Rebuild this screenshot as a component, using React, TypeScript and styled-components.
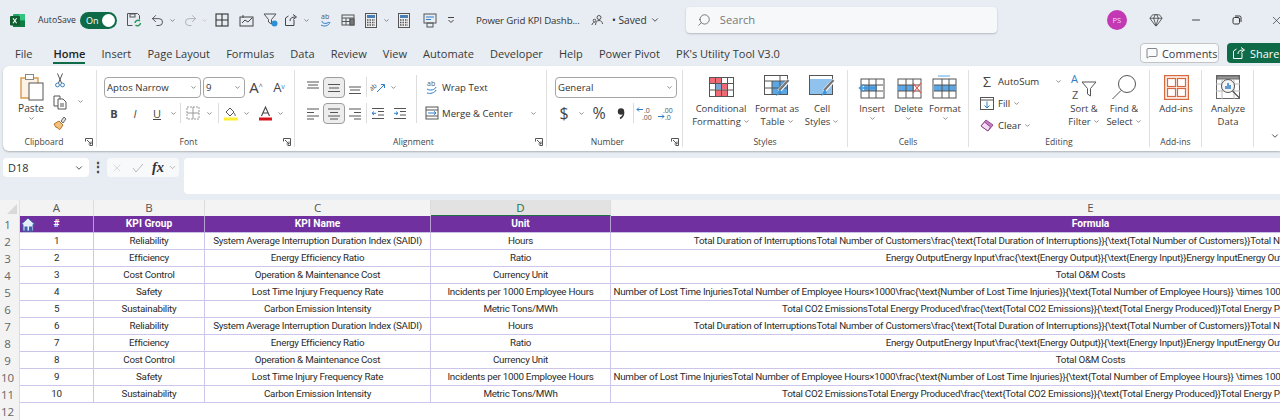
import * as React from 'react';
import styled, { createGlobalStyle } from 'styled-components';
import { Undo2, Redo2, ChevronDown, Minus, X, Gem, Search, MessageSquare } from 'lucide-react';

const UI_FONT = '"Open Sans", "Noto Sans", sans-serif';
const SHEET_FONT = 'Roboto, "Noto Sans", sans-serif';

const GlobalStyle = createGlobalStyle`
  html, body { margin: 0; padding: 0; background: #e7edf3; overflow: hidden; }
  * { box-sizing: border-box; }
  svg { overflow: visible; flex: none; }
`;

const Page = styled.div`
  width: 1280px;
  height: 420px;
  overflow: hidden;
  background: #e7edf3;
  font-family: ${UI_FONT};
  color: #3c3c3c;
`;

/* ---------- title bar ---------- */
const TitleBar = styled.div`
  display: flex;
  align-items: center;
  height: 40px;
  padding-left: 10px;
`;
const QatSlot = styled.div<{ $w: number; $ml?: number }>`
  flex: none;
  width: ${(p) => p.$w}px;
  margin-left: ${(p) => p.$ml ?? 0}px;
  display: flex;
  align-items: center;
  justify-content: center;
`;
const AutoSaveLabel = styled.span`
  flex: none;
  margin-left: 14px;
  width: 42px;
  font-size: 8.7px;
  color: #333;
`;
const Toggle = styled.div`
  flex: none;
  width: 37px;
  height: 17px;
  border-radius: 9px;
  background: #0f6b47;
  color: #fff;
  font-size: 9px;
  display: flex;
  align-items: center;
  justify-content: space-between;
  padding: 0 2px 0 6px;
`;
const Knob = styled.i`
  width: 13px;
  height: 13px;
  border-radius: 50%;
  background: #fff;
`;
const DocTitle = styled.span`
  flex: none;
  margin-left: 20px;
  width: 113px;
  font-size: 9.7px;
  letter-spacing: -0.12px;
  white-space: nowrap;
  color: #333;
`;
const SavedLabel = styled.span`
  flex: none;
  margin-left: 7px;
  font-size: 10.2px;
  white-space: nowrap;
  color: #333;
`;
const SearchBox = styled.div`
  flex: none;
  margin-left: 25px;
  width: 311px;
  height: 26px;
  margin-top: -1px;
  background: #f7f8fa;
  border-radius: 4px;
  box-shadow: 0 1px 2px rgba(0, 0, 0, 0.22);
  display: flex;
  align-items: center;
  gap: 9px;
  padding-left: 11px;
  font-size: 11.2px;
  color: #777;
`;
const SearchGlyph = styled(Search)`
  transform: scaleX(-1);
`;
const Avatar = styled.div`
  flex: none;
  margin-left: 110px;
  width: 20px;
  height: 20px;
  border-radius: 50%;
  background: #c239b3;
  color: #f6d9f2;
  font-size: 7.5px;
  display: flex;
  align-items: center;
  justify-content: center;
`;

/* ---------- tabs ---------- */
const TabRow = styled.div`
  display: flex;
  align-items: flex-start;
  height: 26px;
  padding: 4px 0 0 15px;
`;
const Tab = styled.div<{ $active?: boolean }>`
  flex: none;
  margin-right: 16.1px;
  height: 20px;
  line-height: 20px;
  font-size: 11.05px;
  white-space: nowrap;
  color: ${(p) => (p.$active ? '#222' : '#3a3a3a')};
  font-weight: ${(p) => (p.$active ? 600 : 400)};
  border-bottom: ${(p) => (p.$active ? '2px solid #0f6b47' : '2px solid transparent')};
  &:first-child {
    margin-right: 21px;
  }
`;
const TabActions = styled.div`
  margin-left: auto;
  display: flex;
  gap: 8px;
  margin-top: -1px;
`;
const CommentsBtn = styled.div`
  width: 79px;
  height: 20px;
  border: 1px solid #c4c4c4;
  border-radius: 4px;
  background: #fafbfc;
  font-size: 10.9px;
  display: flex;
  align-items: center;
  gap: 4px;
  padding-left: 5px;
`;
const ShareBtn = styled.div`
  width: 53px;
  height: 20px;
  border-radius: 4px 0 0 4px;
  background: #0f6b47;
  color: #fff;
  font-size: 10.9px;
  display: flex;
  align-items: center;
  gap: 4px;
  padding-left: 5px;
  white-space: nowrap;
`;

/* ---------- ribbon ---------- */
const Ribbon = styled.div`
  display: flex;
  margin-left: 3px;
  height: 85px;
  padding-top: 4px;
  background: #fff;
  border-radius: 6px 0 0 6px;
  box-shadow: 0 1px 2px rgba(0, 0, 0, 0.25);
`;
const Group = styled.div<{ $w: number; $pad?: number }>`
  position: relative;
  flex: none;
  width: ${(p) => p.$w}px;
  height: 77px;
  padding-left: ${(p) => p.$pad ?? 0}px;
  border-right: 1px solid #e0e0e0;
  display: flex;
  flex-direction: column;
`;
const GroupBody = styled.div`
  flex: 1;
  display: flex;
  min-height: 0;
`;
const GroupLabel = styled.div<{ $pull?: number }>`
  height: 10px;
  line-height: 10px;
  margin-left: ${(p) => -(p.$pull ?? 0)}px;
  font-size: 8.6px;
  text-align: center;
  color: #444;
`;
const Launcher = styled.svg`
  position: absolute;
  right: 3px;
  bottom: 1px;
  width: 8px;
  height: 8px;
`;
const Stack = styled.div<{ $w?: number; $gap?: number; $pt?: number; $ml?: number }>`
  flex: none;
  width: ${(p) => (p.$w ? `${p.$w}px` : 'auto')};
  margin-left: ${(p) => p.$ml ?? 0}px;
  display: flex;
  flex-direction: column;
  gap: ${(p) => p.$gap ?? 4}px;
  padding-top: ${(p) => p.$pt ?? 6}px;
`;
const ToolRow = styled.div`
  display: flex;
  align-items: center;
  height: 22px;
`;
const ToolBtn = styled.div<{ $w: number; $on?: boolean }>`
  flex: none;
  width: ${(p) => p.$w}px;
  height: 21px;
  display: flex;
  align-items: center;
  justify-content: center;
  border-radius: 4px;
  font-size: 12px;
  color: #444;
  background: ${(p) => (p.$on ? '#ededed' : 'transparent')};
  border: ${(p) => (p.$on ? '1px solid #9d9d9d' : '1px solid transparent')};
`;
const Glyph = styled.span<{ $size: number; $bold?: boolean; $italic?: boolean; $under?: boolean }>`
  font-size: ${(p) => p.$size}px;
  font-weight: ${(p) => (p.$bold ? 700 : 400)};
  font-style: ${(p) => (p.$italic ? 'italic' : 'normal')};
  text-decoration: ${(p) => (p.$under ? 'underline' : 'none')};
`;
const Caret = styled.sup<{ $blue?: boolean }>`
  font-size: 7px;
  color: ${(p) => (p.$blue ? '#2f7dc8' : '#555')};
  line-height: 0;
`;
const RowSep = styled.div<{ $w: number }>`
  flex: none;
  width: ${(p) => p.$w}px;
  height: 20px;
  display: flex;
  justify-content: center;
  &::before {
    content: '';
    width: 1px;
    background: #dcdcdc;
  }
`;
const TallSep = styled(RowSep)`
  height: 48px;
  margin-top: 5px;
`;
const Combo = styled.div<{ $w: number; $ml?: number }>`
  flex: none;
  width: ${(p) => p.$w}px;
  margin-left: ${(p) => p.$ml ?? 0}px;
  height: 21px;
  border: 1px solid #a5a5a5;
  border-radius: 4px;
  display: flex;
  align-items: center;
  justify-content: space-between;
  padding: 0 3px 0 2px;
  font-size: 9.6px;
  color: #333;
`;
const InlineCmd = styled.div<{ $w?: number }>`
  display: flex;
  align-items: center;
  gap: 3px;
  height: 22px;
  width: ${(p) => (p.$w ? `${p.$w}px` : 'auto')};
  font-size: 9.6px;
  color: #333;
  white-space: nowrap;
`;
const ChevSlot = styled.div<{ $ml?: number; $mt?: number }>`
  margin-left: ${(p) => p.$ml ?? 0}px;
  margin-top: ${(p) => p.$mt ?? 0}px;
  display: flex;
`;
const BigCmd = styled.div<{ $w: number; $ml?: number }>`
  flex: none;
  width: ${(p) => p.$w}px;
  margin-left: ${(p) => p.$ml ?? 0}px;
  display: flex;
  flex-direction: column;
  align-items: center;
  padding-top: 2px;
  font-size: 9.5px;
  line-height: 13px;
  color: #3c3c3c;
  text-align: center;
  white-space: nowrap;
`;
const BigIcon = styled.div`
  height: 30px;
  display: flex;
  align-items: center;
`;
const PasteCmd = styled(BigCmd)`
  font-size: 10.2px;
`;
const ChevLine = styled.span`
  display: inline-flex;
  align-items: center;
  gap: 2px;
`;
const CollapseSlot = styled.div`
  flex: 1;
  display: flex;
  align-items: flex-end;
  justify-content: flex-end;
  padding: 0 0 6px;
  height: 77px;
`;

/* ---------- formula bar ---------- */
const FormulaBar = styled.div`
  display: flex;
  align-items: flex-start;
  height: 49px;
  padding: 7px 0 0 3px;
`;
const NameBox = styled.div`
  width: 86px;
  height: 19px;
  background: #fff;
  border-radius: 4px;
  font-size: 11px;
  display: flex;
  align-items: center;
  justify-content: space-between;
  padding: 0 5px;
  color: #333;
`;
const Dots = styled.div`
  width: 18px;
  height: 19px;
  text-align: center;
  line-height: 18px;
  font-size: 14px;
  font-weight: 700;
  color: #444;
`;
const FxBox = styled.div`
  width: 72px;
  height: 19px;
  background: #f8f9fb;
  border-radius: 4px;
  display: flex;
  align-items: center;
  color: #bbb;
`;
const FxLabel = styled.span`
  font-family: 'Liberation Serif', serif;
  font-style: italic;
  font-weight: 700;
  font-size: 14.5px;
  color: #333;
`;
const FormulaInput = styled.div`
  margin-left: 5px;
  flex: 1;
  height: 36px;
  background: #fff;
  border-radius: 4px 0 0 4px;
`;

/* ---------- sheet ---------- */
const SheetGrid = styled.div`
  width: 1571px;
  display: grid;
  grid-template-columns: 20px 74px 111px 226px 180px 960px;
  grid-auto-rows: 17px;
  grid-template-rows: 16px;
  background: #fff;
  font-family: ${SHEET_FONT};
`;
const Corner = styled.div`
  background: #f3f3f3;
  border-right: 1px solid #e0e0e0;
  display: flex;
  align-items: flex-end;
  justify-content: flex-end;
  padding: 0 2px 2px 0;
  &::before {
    content: '';
    border-style: solid;
    border-width: 0 0 10px 10px;
    border-color: transparent transparent #d9d9d9 transparent;
  }
`;
const ColHead = styled.div<{ $on?: boolean }>`
  background: ${(p) => (p.$on ? '#e2e2e2' : '#f3f3f3')};
  border-right: 1px solid #dcdcdc;
  border-bottom: ${(p) => (p.$on ? '1px solid #1f7145' : '1px solid #f3f3f3')};
  font-size: 11.5px;
  color: ${(p) => (p.$on ? '#1f7145' : '#555')};
  font-family: ${UI_FONT};
  text-align: center;
  line-height: 15px;
`;
const RowHead = styled.div`
  background: #f3f3f3;
  border-right: 1px solid #dcdcdc;
  font-family: ${UI_FONT};
  font-size: 11.5px;
  color: #666;
  padding-right: 4px;
  text-align: center;
  line-height: 17px;
`;
const HeadCell = styled.div`
  position: relative;
  background: #7030a0;
  color: #fff;
  font-weight: 700;
  font-size: 10.2px;
  text-align: center;
  line-height: 16px;
  white-space: nowrap;
  border-right: 1px solid #b9a0d4;
  border-bottom: 1px solid #c9bfe6;
`;
const HomeMark = styled.svg`
  position: absolute;
  left: 0;
  top: 0;
  width: 16px;
  height: 16px;
`;
const Cell = styled.div`
  background: #fff;
  font-size: 9.8px;
  letter-spacing: -0.26px;
  color: #2b2b2b;
  text-align: center;
  line-height: 16px;
  white-space: nowrap;
  border-right: 1px solid #cdc6ea;
  border-bottom: 1px solid #cdc6ea;
  overflow: hidden;
`;
const FormulaCell = styled(Cell)`
  display: flex;
  justify-content: center;
`;
const FormulaText = styled.span`
  flex: none;
`;
const BlankCell = styled.div``;

/* ---------- icons ---------- */
const Chev = ({ s = 7, c = '#555' }: { s?: number; c?: string }) => (
  <ChevronDown size={s} color={c} strokeWidth={2.2} />
);
const ExcelLogo = () => (
  <svg width="15" height="15" viewBox="0 0 15 15">
    <rect x="3" y="1" width="12" height="13" rx="1.2" fill="#21a366" />
    <rect x="9" y="1" width="6" height="6.5" fill="#33c481" />
    <rect x="3" y="7.5" width="12" height="6.5" fill="#107c41" />
    <rect x="0" y="3" width="10" height="9.5" rx="1" fill="#0e5c2f" />
    <path d="M3 5.3l3.6 5M6.6 5.3L3 10.3" stroke="#fff" strokeWidth="1.1" />
  </svg>
);
const SaveIcon = () => (
  <svg width="16" height="16" viewBox="0 0 16 16" fill="none">
    <path d="M1.5 1.500h10l2 2v4M1.500 1.500v12h5" stroke="#555" />
    <rect x="4" y="2" width="5" height="3" stroke="#555" />
    <path d="M9 11a3 3 0 0 1 5-2M14.500 11a3 3 0 0 1-5 2" stroke="#2c9a5f" strokeWidth="1.500" />
  </svg>
);
const GridIcon = () => (
  <svg width="14" height="14" viewBox="0 0 14 14" fill="none" stroke="#333" strokeWidth="1.100">
    <rect x="1" y="1" width="12" height="12" />
    <path d="M7 1v12M1 7h12" />
  </svg>
);
const PicIcon = () => (
  <svg width="15" height="13" viewBox="0 0 15 13" fill="none" stroke="#444">
    <rect x="1" y="3" width="13" height="9" />
    <path d="M3 9l3-3 3 2 4-4M4 1v3" />
  </svg>
);
const FilterIcon = () => (
  <svg width="16" height="16" viewBox="0 0 16 16" fill="none">
    <path d="M1 2h12L8.500 7.500V12L5.500 10V7.500z" stroke="#555" />
    <circle cx="11.500" cy="11.500" r="3" fill="#2f8fd6" />
  </svg>
);
const ShareIcon = ({ c = '#444' }: { c?: string }) => (
  <svg width="14" height="14" viewBox="0 0 14 14" fill="none" stroke={c}>
    <path d="M10 7v5.500H1.500V5l3-2M6 8c0-3 2-4 5-4M9 1.500L12.500 4 9 6.500" />
  </svg>
);
const AbIcon = () => (
  <svg width="14" height="16" viewBox="0 0 14 16" fill="none">
    <text x="2" y="7" fontSize="7" fill="#555" fontFamily="Open Sans">ab</text>
    <path d="M3 9c0 3 5 3 7 1M2 13c3 2 8 1 9-3" stroke="#2f7dc8" />
  </svg>
);
const TableIcon = () => (
  <svg width="14" height="14" viewBox="0 0 14 14" fill="none" stroke="#555">
    <rect x="1" y="2" width="12" height="10" />
    <path d="M1 5h12M5 5v7M9 5v7M1 8.500h8" />
    <rect x="9" y="6" width="4" height="6" fill="#777" />
  </svg>
);
const CalcIcon = () => (
  <svg width="12" height="15" viewBox="0 0 12 15">
    <rect x="0.500" y="0.500" width="11" height="14" fill="#efefef" stroke="#555" />
    <rect x="2" y="2" width="8" height="3" fill="#4a7fb5" />
    <path d="M2 7h8M2 9.500h8M2 12h8" stroke="#555" strokeWidth="1.400" strokeDasharray="1.500 1" />
  </svg>
);
const PrintIcon = () => (
  <svg width="14" height="15" viewBox="0 0 14 15" fill="none" stroke="#555">
    <rect x="1" y="1" width="12" height="9" />
    <path d="M3 4h8M3 6.500h5" stroke="#2f7dc8" />
    <rect x="4" y="10" width="6" height="4" />
  </svg>
);
const QatMore = () => (
  <svg width="8" height="8" viewBox="0 0 8 8" fill="none" stroke="#444">
    <path d="M1 1.500h6M1.500 4L4 6.500 6.500 4" />
  </svg>
);
const PeopleIcon = () => (
  <svg width="13" height="12" viewBox="0 0 13 12" fill="none" stroke="#444" strokeWidth="0.900">
    <circle cx="8" cy="3.500" r="2" />
    <path d="M4.500 11c0-3 1.500-4.500 3.500-4.500S11.500 8 11.500 10M1 11c0-1.500 1-2.500 2.500-2.500" />
    <circle cx="3.500" cy="6.500" r="1.300" />
  </svg>
);
const RestoreIcon = () => (
  <svg width="10" height="10" viewBox="0 0 10 10" fill="none" stroke="#333">
    <rect x="1" y="2.500" width="6.500" height="6.500" rx="1.500" />
    <path d="M3 1h4.500A1.500 1.500 0 0 1 9 2.500V7" />
  </svg>
);
const LaunchIcon = () => (
  <Launcher viewBox="0 0 8 8" fill="none" stroke="#555">
    <path d="M0.500 3.500v-3h7v7h-3M2 2l4 4M6 3.500V6H3.500" />
  </Launcher>
);
const PasteIcon = () => (
  <svg width="26" height="28" viewBox="0 0 26 28" fill="none">
    <path d="M3 5h17v20H3z" fill="#fdf3e5" stroke="#d99a4e" strokeWidth="1.400" />
    <rect x="7.500" y="1.500" width="8" height="5" fill="#fff" stroke="#888" />
    <rect x="11" y="10" width="14" height="17" fill="#fff" stroke="#555" />
  </svg>
);
const CutIcon = () => (
  <svg width="10" height="15" viewBox="0 0 10 15" fill="none" stroke="#555">
    <path d="M2.500 0.500L6.500 10M7.500 0.500L3.500 10" />
    <circle cx="2.500" cy="12" r="1.900" stroke="#3d7fb8" />
    <circle cx="7.500" cy="12" r="1.900" stroke="#3d7fb8" />
  </svg>
);
const CopyIcon = () => (
  <svg width="14" height="14" viewBox="0 0 14 14" fill="none" stroke="#555">
    <path d="M1 1h6v10H1z" />
    <path d="M5 4h5l3 3v7H5z" fill="#fff" />
    <path d="M7 9h4M7 11h4" />
  </svg>
);
const BrushIcon = () => (
  <svg width="14" height="14" viewBox="0 0 14 14" fill="none">
    <path d="M1 8l5-3 4 4-3 4.500-2-1-1-1.500-1 .5z" fill="#f2c27a" stroke="#b8772c" />
    <path d="M8 5l3-4 2 2-3 4z" stroke="#666" fill="#ddd" />
  </svg>
);
const lineSets = {
  left: ['M1 3h12', 'M1 6.500h7', 'M1 10h12', 'M1 13h7'],
  center: ['M1 3h12', 'M3 6.500h8', 'M1 10h12', 'M3 13h8'],
  right: ['M1 3h12', 'M6 6.500h7', 'M1 10h12', 'M6 13h7'],
  top: ['M1 2h12', 'M2 5h10', 'M1 8h12'],
  mid: ['M1 4.500h12', 'M2 8h10', 'M1 11.500h12'],
  bot: ['M1 7h12', 'M2 10h10', 'M1 13.500h12'],
};
const Lines = ({ kind }: { kind: keyof typeof lineSets }) => (
  <svg width="14" height="15" viewBox="0 0 14 15" fill="none" stroke="#555">
    {lineSets[kind].map((d) => (
      <path key={d} d={d} />
    ))}
  </svg>
);
const OrientIcon = () => (
  <svg width="16" height="14" viewBox="0 0 16 14" fill="none">
    <text x="0" y="9" fontSize="6.5" fill="#555" fontFamily="Open Sans" transform="rotate(-40 4 8)">ab</text>
    <path d="M7 12l7-7M11 4.500h3.500V8" stroke="#2f7dc8" />
  </svg>
);
const IndentIcon = ({ out }: { out?: boolean }) => (
  <svg width="14" height="13" viewBox="0 0 14 13" fill="none">
    <path d="M1 1.500h12M7 4.500h6M7 8h6M1 11.500h12" stroke="#555" />
    <path d={out ? 'M1 6.300h4M3 4.500L5 6.300 3 8' : 'M5 6.300H1M3 4.500L1 6.300 3 8'} stroke="#2f7dc8" />
  </svg>
);
const BordersIcon = () => (
  <svg width="14" height="14" viewBox="0 0 14 14" fill="none" stroke="#999">
    <rect x="1" y="1" width="12" height="12" strokeDasharray="2 1" />
    <path d="M7 1v12M1 7h12" />
  </svg>
);
const FillIcon = () => (
  <svg width="16" height="16" viewBox="0 0 16 16" fill="none">
    <path d="M3 7l4-4 4 4-4 4z" stroke="#555" />
    <path d="M11 8c1 1.500 1.500 2 1 3" stroke="#555" />
    <rect x="1" y="12.500" width="14" height="3" fill="#ffee33" />
  </svg>
);
const FontColorIcon = () => (
  <svg width="15" height="16" viewBox="0 0 15 16" fill="none">
    <path d="M3.500 11l4-9 4 9M5 8h5" stroke="#444" strokeWidth="1.100" />
    <rect x="1" y="12.500" width="13" height="3" fill="#d8141c" />
  </svg>
);
const WrapIcon = () => (
  <svg width="14" height="16" viewBox="0 0 14 16" fill="none">
    <text x="2" y="7" fontSize="7" fill="#555" fontFamily="Open Sans">ab</text>
    <path d="M2 10c3 2 8 1 9-2M2 14c3 1 8 0 9-3" stroke="#2f7dc8" />
  </svg>
);
const MergeIcon = () => (
  <svg width="14" height="14" viewBox="0 0 14 14" fill="none">
    <rect x="1" y="1" width="12" height="12" stroke="#555" />
    <path d="M1 4h12M1 10h12" stroke="#555" />
    <path d="M3 7h8M9 5.300L11 7 9 8.700" stroke="#2f7dc8" />
  </svg>
);
const Comma = () => (
  <svg width="8" height="13" viewBox="0 0 8 13">
    <circle cx="4" cy="4.500" r="3.200" fill="#333" />
    <path d="M6.500 5c.5 3-1 5-3.500 6.500" stroke="#333" strokeWidth="1.500" fill="none" />
  </svg>
);
const DecimalIcon = ({ more }: { more?: boolean }) => (
  <svg width="16" height="15" viewBox="0 0 16 15" fill="none">
    <text x={more ? 6 : 8} y="6.500" fontSize="7" fill="#555" fontFamily="Open Sans">{more ? '.00' : '.0'}</text>
    <text x={more ? 8 : 6} y="13.500" fontSize="7" fill="#555" fontFamily="Open Sans">{more ? '.0' : '.00'}</text>
    <path d={more ? 'M1 10.500h6M5 8.500l2 2-2 2' : 'M7 3.500H1M3 1.500l-2 2 2 2'} stroke="#2f7dc8" />
  </svg>
);
const CondIcon = () => (
  <svg width="25" height="20" viewBox="0 0 25 20">
    <rect x="0.500" y="0.500" width="24" height="19" fill="#fff" stroke="#555" />
    <rect x="1" y="1" width="11" height="5.500" fill="#ee6b75" />
    <rect x="7" y="7" width="5" height="5.500" fill="#7aa6d6" />
    <rect x="12" y="7" width="6" height="5.500" fill="#ee6b75" />
    <rect x="7" y="13" width="11" height="6" fill="#ee6b75" />
    <path d="M6.500 0v20M12.500 0v20M18.500 0v20M0 6.500h25M0 13h25" stroke="#555" />
  </svg>
);
const TableBrush = ({ full }: { full?: boolean }) => (
  <svg width="26" height="24" viewBox="0 0 26 24" fill="none">
    <rect x="0.500" y="0.500" width="23" height="19" fill="#fff" stroke="#555" />
    <rect x="1" y={full ? 4 : 6} width={full ? 22 : 8} height={full ? 15 : 6} fill={full ? '#8fc3ee' : '#fff'} />
    {!full && <rect x="8" y="6" width="15" height="13" fill="#5ba6e3" />}
    {!full && <path d="M8 6v14M16 0v20M0 6h24M0 13h24" stroke="#555" />}
    <path d="M25 5L15 16" stroke="#fff" strokeWidth="4" />
    <path d="M24.500 5L15 15.500" stroke="#777" strokeWidth="2.400" />
    <path d="M16 14l-4 7 6-3z" fill="#3f95d9" />
  </svg>
);
const CellGrid = ({ mode }: { mode: 'insert' | 'delete' | 'format' }) => (
  <svg width="28" height="24" viewBox="0 0 28 24" fill="none">
    {mode === 'format' && <path d="M7 1h12" stroke="#5ba6e3" />}
    <rect x={mode === 'format' ? 2 : 3} y="4" width="23" height="19" stroke="#555" fill="#fff" />
    <rect x="3" y="10" width={mode === 'format' ? 22 : 16} height="6" fill="#5ba6e3" />
    <path d="M11 4v19M18 4v19M3 10h22M3 16h22" stroke="#555" />
    {mode === 'insert' && <path d="M2 13h16M6 9.500L1.500 13 6 16.500" stroke="#3f95d9" strokeWidth="1.500" fill="#d5e9f9" />}
    {mode === 'delete' && <path d="M18 8l8 10M26 8l-8 10" stroke="#e0564c" strokeWidth="1.200" />}
  </svg>
);
const FillDown = () => (
  <svg width="14" height="13" viewBox="0 0 14 13" fill="none">
    <rect x="0.500" y="0.500" width="13" height="12" stroke="#555" />
    <path d="M0 3h14" stroke="#555" />
    <path d="M7 4.500V11M4.500 8.500L7 11l2.500-2.500" stroke="#2f7dc8" />
  </svg>
);
const Eraser = () => (
  <svg width="14" height="13" viewBox="0 0 14 13">
    <path d="M1 7l5-6 7 5-5 6z" fill="#c979c8" stroke="#8e4f8e" />
    <path d="M1 7l3.500-4 6 5L8 12z" fill="#f3dcf3" stroke="#8e4f8e" />
  </svg>
);
const SortIcon = () => (
  <svg width="26" height="26" viewBox="0 0 26 26" fill="none">
    <text x="0" y="9" fontSize="11" fill="#2f7dc8" fontFamily="Open Sans">A</text>
    <text x="1" y="25" fontSize="11" fill="#555" fontFamily="Open Sans">Z</text>
    <path d="M11 8h14l-5.500 6.500V22l-3-2v-5.500z" stroke="#555" />
  </svg>
);
const FindIcon = () => (
  <svg width="26" height="26" viewBox="0 0 26 26" fill="none" stroke="#555">
    <circle cx="16" cy="10" r="8.500" />
    <path d="M10 16.500L1.500 25" />
  </svg>
);
const AddinsIcon = () => (
  <svg width="25" height="25" viewBox="0 0 25 25" fill="none" stroke="#d8693f" strokeWidth="1.200">
    <rect x="0.600" y="0.600" width="23.800" height="23.800" fill="#fdf1ec" />
    <rect x="3.500" y="3.500" width="8" height="8" fill="#fff" />
    <rect x="13.500" y="3.500" width="8" height="8" fill="#fff" />
    <rect x="3.500" y="13.500" width="8" height="8" fill="#fff" />
    <rect x="13.500" y="13.500" width="8" height="8" fill="#fff" />
  </svg>
);
const AnalyzeIcon = () => (
  <svg width="25" height="25" viewBox="0 0 25 25" fill="none" stroke="#666">
    <rect x="0.500" y="0.500" width="23" height="23" fill="#fff" />
    <rect x="1" y="1" width="22" height="3" fill="#999" />
    <path d="M6 4v20M18 4v20M0 9h24M0 16h24" stroke="#bbb" />
    <circle cx="12" cy="11" r="6.500" fill="#f4f4f4" stroke="#555" />
    <path d="M10 14V11M12 14V8M14 14V10" stroke="#2f7dc8" strokeWidth="1.500" />
    <path d="M16.500 16l7 7" stroke="#555" strokeWidth="1.300" />
  </svg>
);

const SAIDI = 'Total Duration of InterruptionsTotal Number of Customers\\frac{\\text{Total Duration of Interruptions}}{\\text{Total Number of Customers}}Total Number of CustomersTotal Duration of Interruptions';
const EFF = 'Energy OutputEnergy Input\\frac{\\text{Energy Output}}{\\text{Energy Input}}Energy InputEnergy Output';
const LTI = 'Number of Lost Time InjuriesTotal Number of Employee Hours×1000\\frac{\\text{Number of Lost Time Injuries}}{\\text{Total Number of Employee Hours}} \\times 1000Total Number of Employee HoursNumber of Lost Time Injuries×1000';
const CO2 = 'Total CO2 EmissionsTotal Energy Produced\\frac{\\text{Total CO2 Emissions}}{\\text{Total Energy Produced}}Total Energy ProducedTotal CO2 Emissions';

const rows = [
  ['1', 'Reliability', 'System Average Interruption Duration Index (SAIDI)', 'Hours', SAIDI],
  ['2', 'Efficiency', 'Energy Efficiency Ratio', 'Ratio', EFF],
  ['3', 'Cost Control', 'Operation & Maintenance Cost', 'Currency Unit', 'Total O&M Costs'],
  ['4', 'Safety', 'Lost Time Injury Frequency Rate', 'Incidents per 1000 Employee Hours', LTI],
  ['5', 'Sustainability', 'Carbon Emission Intensity', 'Metric Tons/MWh', CO2],
  ['6', 'Reliability', 'System Average Interruption Duration Index (SAIDI)', 'Hours', SAIDI],
  ['7', 'Efficiency', 'Energy Efficiency Ratio', 'Ratio', EFF],
  ['8', 'Cost Control', 'Operation & Maintenance Cost', 'Currency Unit', 'Total O&M Costs'],
  ['9', 'Safety', 'Lost Time Injury Frequency Rate', 'Incidents per 1000 Employee Hours', LTI],
  ['10', 'Sustainability', 'Carbon Emission Intensity', 'Metric Tons/MWh', CO2],
];

const tabs = ['File', 'Home', 'Insert', 'Page Layout', 'Formulas', 'Data', 'Review', 'View', 'Automate', 'Developer', 'Help', 'Power Pivot', "PK's Utility Tool V3.0"];

export default function App() {
  return (
    <Page>
      <GlobalStyle />
      <TitleBar>
        <QatSlot $w={14}><ExcelLogo /></QatSlot>
        <AutoSaveLabel>AutoSave</AutoSaveLabel>
        <Toggle>On<Knob /></Toggle>
        <QatSlot $w={20} $ml={7}><SaveIcon /></QatSlot>
        <QatSlot $w={20} $ml={3}><Undo2 size={15} color="#444" strokeWidth={1.4} /></QatSlot>
        <QatSlot $w={10}><Chev /></QatSlot>
        <QatSlot $w={20} $ml={3}><Redo2 size={15} color="#aaa" strokeWidth={1.4} /></QatSlot>
        <QatSlot $w={9}><Chev c="#bbb" /></QatSlot>
        <QatSlot $w={20} $ml={3}><GridIcon /></QatSlot>
        <QatSlot $w={20} $ml={4}><PicIcon /></QatSlot>
        <QatSlot $w={20} $ml={5}><FilterIcon /></QatSlot>
        <QatSlot $w={20}><ShareIcon /></QatSlot>
        <QatSlot $w={10}><Chev /></QatSlot>
        <QatSlot $w={20} $ml={5}><AbIcon /></QatSlot>
        <QatSlot $w={20} $ml={2}><TableIcon /></QatSlot>
        <QatSlot $w={20} $ml={3}><CalcIcon /></QatSlot>
        <QatSlot $w={10}><Chev /></QatSlot>
        <QatSlot $w={20} $ml={3}><CalcIcon /></QatSlot>
        <QatSlot $w={20} $ml={6}><PrintIcon /></QatSlot>
        <QatSlot $w={10} $ml={6}><QatMore /></QatSlot>
        <DocTitle>Power Grid KPI Dashb...</DocTitle>
        <QatSlot $w={16}><PeopleIcon /></QatSlot>
        <SavedLabel>• Saved</SavedLabel>
        <QatSlot $w={12} $ml={2}><Chev s={10} c="#444" /></QatSlot>
        <SearchBox><SearchGlyph size={14} color="#555" strokeWidth={1.3} />Search</SearchBox>
        <Avatar>PS</Avatar>
        <QatSlot $w={16} $ml={21}><Gem size={14} color="#333" strokeWidth={1.3} /></QatSlot>
        <QatSlot $w={14} $ml={25}><Minus size={12} color="#444" /></QatSlot>
        <QatSlot $w={14} $ml={27}><RestoreIcon /></QatSlot>
        <QatSlot $w={14} $ml={26}><X size={13} color="#333" strokeWidth={1.3} /></QatSlot>
      </TitleBar>

      <TabRow>
        {tabs.map((t) => (
          <Tab key={t} $active={t === 'Home'}>{t}</Tab>
        ))}
        <TabActions>
          <CommentsBtn><MessageSquare size={12} color="#444" strokeWidth={1.3} />Comments</CommentsBtn>
          <ShareBtn><ShareIcon c="#fff" />Share<Chev c="#fff" s={8} /></ShareBtn>
        </TabActions>
      </TabRow>

      <Ribbon>
        <Group $w={94}>
          <GroupBody>
            <PasteCmd $w={40} $ml={8}>
              <BigIcon><PasteIcon /></BigIcon>
              Paste
              <Chev />
            </PasteCmd>
            <Stack $w={22} $gap={0} $pt={0} $ml={-2}>
              <ToolBtn $w={22}><CutIcon /></ToolBtn>
              <ToolBtn $w={22}><CopyIcon /></ToolBtn>
              <ToolBtn $w={22}><BrushIcon /></ToolBtn>
            </Stack>
            <ChevSlot $mt={28} $ml={6}><Chev /></ChevSlot>
          </GroupBody>
          <GroupLabel $pull={11}>Clipboard</GroupLabel>
          <LaunchIcon />
        </Group>

        <Group $w={198} $pad={7}>
          <GroupBody>
            <Stack>
              <ToolRow>
                <Combo $w={97}>Aptos Narrow<Chev /></Combo>
                <Combo $w={42} $ml={2}>9<Chev /></Combo>
                <ToolBtn $w={22}><Glyph $size={15}>A</Glyph><Caret>^</Caret></ToolBtn>
                <ToolBtn $w={24}><Glyph $size={13}>A</Glyph><Caret $blue>v</Caret></ToolBtn>
              </ToolRow>
              <ToolRow>
                <ToolBtn $w={20}><Glyph $size={11} $bold>B</Glyph></ToolBtn>
                <ToolBtn $w={22}><Glyph $size={11} $italic>I</Glyph></ToolBtn>
                <ToolBtn $w={22}><Glyph $size={11} $under>U</Glyph></ToolBtn>
                <ToolBtn $w={10}><Chev /></ToolBtn>
                <RowSep $w={5} />
                <ToolBtn $w={20}><BordersIcon /></ToolBtn>
                <ToolBtn $w={12}><Chev /></ToolBtn>
                <RowSep $w={6} />
                <ToolBtn $w={20}><FillIcon /></ToolBtn>
                <ToolBtn $w={10}><Chev /></ToolBtn>
                <ToolBtn $w={4} />
                <ToolBtn $w={20}><FontColorIcon /></ToolBtn>
                <ToolBtn $w={10}><Chev /></ToolBtn>
              </ToolRow>
            </Stack>
          </GroupBody>
          <GroupLabel $pull={21}>Font</GroupLabel>
          <LaunchIcon />
        </Group>

        <Group $w={252} $pad={7}>
          <GroupBody>
            <Stack $w={110}>
              <ToolRow>
                <ToolBtn $w={21}><Lines kind="top" /></ToolBtn>
                <ToolBtn $w={22} $on><Lines kind="mid" /></ToolBtn>
                <ToolBtn $w={20}><Lines kind="bot" /></ToolBtn>
                <RowSep $w={3} />
                <ToolBtn $w={20}><OrientIcon /></ToolBtn>
                <ToolBtn $w={10}><Chev /></ToolBtn>
              </ToolRow>
              <ToolRow>
                <ToolBtn $w={21}><Lines kind="left" /></ToolBtn>
                <ToolBtn $w={22} $on><Lines kind="center" /></ToolBtn>
                <ToolBtn $w={20}><Lines kind="right" /></ToolBtn>
                <RowSep $w={3} />
                <ToolBtn $w={20}><IndentIcon /></ToolBtn>
                <ToolBtn $w={24}><IndentIcon out /></ToolBtn>
              </ToolRow>
            </Stack>
            <TallSep $w={8} />
            <Stack $ml={5}>
              <InlineCmd><WrapIcon />Wrap Text</InlineCmd>
              <InlineCmd><MergeIcon />Merge &amp; Center<ChevSlot $ml={14}><Chev /></ChevSlot></InlineCmd>
            </Stack>
          </GroupBody>
          <GroupLabel $pull={21}>Alignment</GroupLabel>
          <LaunchIcon />
        </Group>

        <Group $w={136} $pad={8}>
          <GroupBody>
            <Stack>
              <ToolRow><Combo $w={122}>General<Chev /></Combo></ToolRow>
              <ToolRow>
                <ToolBtn $w={18}><Glyph $size={16}>$</Glyph></ToolBtn>
                <ToolBtn $w={16}><Chev /></ToolBtn>
                <ToolBtn $w={20}><Glyph $size={16}>%</Glyph></ToolBtn>
                <ToolBtn $w={24}><Comma /></ToolBtn>
                <RowSep $w={1} />
                <ToolBtn $w={20}><DecimalIcon /></ToolBtn>
                <ToolBtn $w={22}><DecimalIcon more /></ToolBtn>
              </ToolRow>
            </Stack>
          </GroupBody>
          <GroupLabel $pull={22}>Number</GroupLabel>
          <LaunchIcon />
        </Group>

        <Group $w={165} $pad={5}>
          <GroupBody>
            <BigCmd $w={66}>
              <BigIcon><CondIcon /></BigIcon>
              Conditional
              <ChevLine>Formatting <Chev /></ChevLine>
            </BigCmd>
            <BigCmd $w={46}>
              <BigIcon><TableBrush /></BigIcon>
              Format as
              <ChevLine>Table <Chev /></ChevLine>
            </BigCmd>
            <BigCmd $w={44}>
              <BigIcon><TableBrush full /></BigIcon>
              Cell
              <ChevLine>Styles <Chev /></ChevLine>
            </BigCmd>
          </GroupBody>
          <GroupLabel $pull={5}>Styles</GroupLabel>
        </Group>

        <Group $w={121} $pad={6}>
          <GroupBody>
            <BigCmd $w={36}><BigIcon><CellGrid mode="insert" /></BigIcon>Insert<ChevLine><Chev /></ChevLine></BigCmd>
            <BigCmd $w={37}><BigIcon><CellGrid mode="delete" /></BigIcon>Delete<ChevLine><Chev /></ChevLine></BigCmd>
            <BigCmd $w={36}><BigIcon><CellGrid mode="format" /></BigIcon>Format<ChevLine><Chev /></ChevLine></BigCmd>
          </GroupBody>
          <GroupLabel $pull={6}>Cells</GroupLabel>
        </Group>

        <Group $w={181} $pad={10}>
          <GroupBody>
            <Stack $w={86} $gap={0} $pt={0}>
              <InlineCmd $w={84}><ToolBtn $w={16}><Glyph $size={14}>Σ</Glyph></ToolBtn>AutoSum<ChevSlot $ml={13}><Chev /></ChevSlot></InlineCmd>
              <InlineCmd><ToolBtn $w={16}><FillDown /></ToolBtn>Fill<Chev /></InlineCmd>
              <InlineCmd><ToolBtn $w={16}><Eraser /></ToolBtn>Clear<Chev /></InlineCmd>
            </Stack>
            <BigCmd $w={38}><BigIcon><SortIcon /></BigIcon>Sort &amp;<ChevLine>Filter <Chev /></ChevLine></BigCmd>
            <BigCmd $w={40} $ml={1}><BigIcon><FindIcon /></BigIcon>Find &amp;<ChevLine>Select <Chev /></ChevLine></BigCmd>
          </GroupBody>
          <GroupLabel $pull={10}>Editing</GroupLabel>
        </Group>

        <Group $w={52}>
          <GroupBody>
            <BigCmd $w={52}><BigIcon><AddinsIcon /></BigIcon>Add-ins</BigCmd>
          </GroupBody>
          <GroupLabel>Add-ins</GroupLabel>
        </Group>

        <Group $w={52}>
          <GroupBody>
            <BigCmd $w={52}><BigIcon><AnalyzeIcon /></BigIcon>Analyze<span>Data</span></BigCmd>
          </GroupBody>
          <GroupLabel />
        </Group>

        <CollapseSlot><Chev s={10} c="#444" /></CollapseSlot>
      </Ribbon>

      <FormulaBar>
        <NameBox>D18<Chev s={10} c="#444" /></NameBox>
        <Dots>⋮</Dots>
        <FxBox>
          <QatSlot $w={20}><X size={12} strokeWidth={1} /></QatSlot>
          <QatSlot $w={22}>
            <svg width="12" height="10" viewBox="0 0 12 10" fill="none" stroke="#bbb"><path d="M1 5l3 4 7-8" /></svg>
          </QatSlot>
          <QatSlot $w={18}><FxLabel>fx</FxLabel></QatSlot>
          <QatSlot $w={10}><Chev c="#aaa" s={9} /></QatSlot>
        </FxBox>
        <FormulaInput />
      </FormulaBar>

      <SheetGrid>
        <Corner />
        <ColHead>A</ColHead>
        <ColHead>B</ColHead>
        <ColHead>C</ColHead>
        <ColHead $on>D</ColHead>
        <ColHead>E</ColHead>

        <RowHead>1</RowHead>
        <HeadCell>
          <HomeMark viewBox="0 0 16 16">
            <path d="M8 2L1 8.500h2V15h10V8.500h2z" fill="#e6eefb" stroke="#3f63a8" />
            <rect x="4.500" y="10.500" width="3" height="4.500" fill="#3f63a8" />
            <rect x="9" y="10.500" width="3" height="4.500" fill="#3f63a8" />
          </HomeMark>
          #
        </HeadCell>
        <HeadCell>KPI Group</HeadCell>
        <HeadCell>KPI Name</HeadCell>
        <HeadCell>Unit</HeadCell>
        <HeadCell>Formula</HeadCell>

        {rows.map((r, i) => (
          <React.Fragment key={i}>
            <RowHead>{i + 2}</RowHead>
            <Cell>{r[0]}</Cell>
            <Cell>{r[1]}</Cell>
            <Cell>{r[2]}</Cell>
            <Cell>{r[3]}</Cell>
            <FormulaCell><FormulaText>{r[4]}</FormulaText></FormulaCell>
          </React.Fragment>
        ))}
        <RowHead>12</RowHead>
        <BlankCell />
      </SheetGrid>
    </Page>
  );
}
